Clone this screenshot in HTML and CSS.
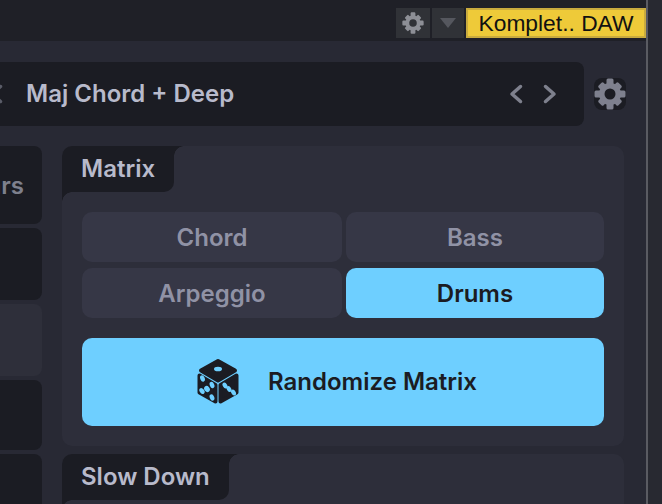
FILE: index.html
```html
<!DOCTYPE html>
<html lang="en">
<head>
<meta charset="utf-8">
<title>Matrix</title>
<link rel="stylesheet" href="styles.css">
</head>
<body>
<svg class="defs" aria-hidden="true">
  <defs>
    <symbol id="gear" viewBox="0 0 32 32">
      <g class="gear-body">
        <circle cx="16" cy="16" r="11"/>
        <rect x="12.500" y="0.500" width="7" height="8" rx="1.500"/>
        <rect x="12.500" y="23.500" width="7" height="8" rx="1.500"/>
        <rect x="0.500" y="12.500" width="8" height="7" rx="1.500"/>
        <rect x="23.500" y="12.500" width="8" height="7" rx="1.500"/>
        <rect x="12.500" y="2" width="7" height="8" rx="1.500" transform="rotate(45 16 16)"/>
        <rect x="12.500" y="22" width="7" height="8" rx="1.500" transform="rotate(45 16 16)"/>
        <rect x="12.500" y="2" width="7" height="8" rx="1.500" transform="rotate(-45 16 16)"/>
        <rect x="12.500" y="22" width="7" height="8" rx="1.500" transform="rotate(-45 16 16)"/>
      </g>
      <circle class="gear-hole" cx="16" cy="16" r="5.500"/>
    </symbol>
  </defs>
</svg>
<div class="app">
  <div class="main">
    <header class="topbar">
      <button class="tool tool-set"><svg class="tool-gear"><use href="#gear"/></svg></button>
      <button class="tool tool-menu"><svg class="tool-arrow" viewBox="0 0 16 10"><path d="M0 0H16L8 10Z"/></svg></button>
      <div class="daw">Komplet.. DAW</div>
    </header>
    <div class="preset-row">
      <div class="preset">
        <svg class="chev chev-cut" viewBox="0 0 14 20"><path d="M11.500 2.500 3 10l8.500 7.500"/></svg>
        <span class="preset-name">Maj Chord + Deep</span>
        <div class="preset-nav">
          <svg class="chev" viewBox="0 0 14 20"><path d="M11.500 2.500 3 10l8.500 7.500"/></svg>
          <svg class="chev" viewBox="0 0 14 20"><path d="M2.500 2.500 11 10l-8.500 7.500"/></svg>
        </div>
      </div>
      <div class="gear-box"><svg class="big-gear"><use href="#gear"/></svg></div>
    </div>
    <div class="content">
      <div class="side">
        <div class="cell cell-first"><span>Bars</span></div>
        <div class="cell"></div>
        <div class="cell cell-active"></div>
        <div class="cell cell-short"></div>
        <div class="cell"></div>
      </div>
      <div class="panels">
        <section class="panel">
          <h2 class="tab">Matrix</h2>
          <div class="panel-body">
            <div class="options">
              <button class="opt">Chord</button>
              <button class="opt">Bass</button>
              <button class="opt">Arpeggio</button>
              <button class="opt on">Drums</button>
            </div>
            <button class="random">
              <svg class="dice" viewBox="0 0 42 47">
                <path class="d" d="M21 3 38 12.500 21 22.500 4 12.500Z"/>
                <path class="d" d="M2.500 17.500 18.500 27V43.500L2.500 34.500Z"/>
                <path class="d" d="M39.500 17.500 23.500 27V43.500L39.500 34.500Z"/>
                <ellipse class="p" cx="21" cy="11" rx="4" ry="2.300"/>
                <ellipse class="p" cx="5.500" cy="20.500" rx="2.200" ry="3.200" transform="rotate(-25 5.500 20.500)"/>
                <ellipse class="p" cx="15" cy="27" rx="2.200" ry="3.200" transform="rotate(-25 15 27)"/>
                <ellipse class="p" cx="10" cy="31" rx="2.600" ry="3.200" transform="rotate(-40 10 31)"/>
                <ellipse class="p" cx="5" cy="33" rx="2.200" ry="3.200" transform="rotate(-40 5 33)"/>
                <ellipse class="p" cx="15" cy="39.500" rx="2.200" ry="3.200" transform="rotate(-25 15 39.500)"/>
                <ellipse class="p" cx="28" cy="27.500" rx="2.200" ry="3.200" transform="rotate(-30 28 27.500)"/>
                <ellipse class="p" cx="32" cy="31" rx="2.200" ry="3.200" transform="rotate(-30 32 31)"/>
                <ellipse class="p" cx="36.500" cy="34.500" rx="2.200" ry="3.200" transform="rotate(-30 36.500 34.500)"/>
              </svg>
              <span>Randomize Matrix</span>
            </button>
          </div>
        </section>
        <section class="panel">
          <h2 class="tab">Slow Down</h2>
          <div class="panel-body short"></div>
        </section>
      </div>
    </div>
  </div>
  <div class="edge"></div>
</div>
</body>
</html>
```
FILE: styles.css
```css
* { box-sizing: border-box; }
html, body { margin: 0; height: 100%; }
body { width: 662px; height: 504px; overflow: hidden; background: #262731; font-family: "Inter", sans-serif; }
button { border: 0; padding: 0; font: inherit; }
.defs { position: absolute; width: 0; height: 0; }
.gear-body { fill: currentColor; }
.gear-hole { fill: var(--hole); }
.app { display: flex; height: 504px; overflow: hidden; }
.main { width: 648px; flex: none; background: #282934; border-right: 2px solid #5a5b62; }
.edge { flex: 1; background: #282931; }
.topbar { height: 41px; background: #1f2027; display: flex; justify-content: flex-end; gap: 2px; padding: 8px 0 3px; }
.tool { height: 30px; background: #303237; display: flex; align-items: center; justify-content: center; }
.tool-set { width: 34px; }
.tool-menu { width: 32px; }
.tool-gear { width: 22px; height: 22px; color: #8d8f96; --hole: #303237; }
.tool-arrow { width: 16px; height: 10px; fill: #55575e; }
.daw { width: 180px; height: 30px; background: #eeca39; border: 2px solid #c9ab3e; color: #111; font: 22.800px/26px "Liberation Sans", sans-serif; text-align: center; }
.preset-row { display: flex; align-items: center; gap: 10px; margin-top: 21px; }
.preset { width: 584px; height: 64px; background: #1b1c23; border-radius: 0 8px 8px 0; display: flex; align-items: center; padding: 0 27px 0 0; }
.preset-name { flex: 1; margin-left: 23px; padding-bottom: 2px; font-size: 24px; font-weight: 600; color: #b8bacb; }
.preset-nav { display: flex; gap: 20px; }
.chev { display: block; flex: none; width: 14px; height: 20px; fill: none; stroke: #7e808d; stroke-width: 3.500; stroke-linecap: round; stroke-linejoin: round; }
.chev-cut { margin-left: -11px; stroke: #5a5c68; }
.gear-box { width: 32px; height: 32px; background: #1b1c23; border-radius: 8px; }
.big-gear { display: block; width: 32px; height: 32px; color: #7e808e; --hole: #1b1c23; }
.content { display: flex; gap: 20px; margin-top: 20px; }
.side { width: 42px; flex: none; display: flex; flex-direction: column; gap: 4px; }
.cell { background: #1b1c23; border-radius: 0 8px 8px 0; height: 72px; }
.cell-first { height: 78px; display: flex; align-items: center; justify-content: flex-end; padding-right: 18px; font-size: 24px; font-weight: 600; color: #7e808d; white-space: nowrap; }
.cell-active { background: #2e2f3a; }
.cell-short { height: 70px; }
.panels { width: 562px; display: flex; flex-direction: column; gap: 8px; }
.panel { background: #2d2e3a; border-radius: 10px; }
.tab { position: relative; margin: 0; height: 46px; width: fit-content; white-space: nowrap; background: #1b1c23; border-radius: 10px 0 10px 0; font-size: 24px; font-weight: 600; color: #b8bacb; padding: 6px 19px 0 19px; line-height: 34px; }
.tab::before, .tab::after { content: ""; position: absolute; width: 10px; height: 10px; background: radial-gradient(circle at 100% 100%, transparent 9.500px, #1b1c23 10px); }
.tab::after { left: 100%; top: 0; }
.tab::before { left: 0; top: 100%; }
.panel-body { padding: 20px; }
.short { height: 20px; padding: 0; }
.options { display: grid; grid-template-columns: 260px 258px; gap: 6px 4px; }
.opt { height: 50px; border-radius: 10px; background: #363746; color: #9092a5; font-size: 24px; font-weight: 600; }
.opt.on { background: #6ecfff; color: #1b1c23; }
.random { margin-top: 20px; width: 100%; height: 88px; border-radius: 10px; background: #6ecfff; color: #1b1c23; display: flex; align-items: center; justify-content: center; gap: 29px; padding: 0 12px 2px 0; font-size: 24px; font-weight: 600; }
.dice { width: 42px; height: 47px; flex: none; }
.d { fill: #1b1c23; stroke: #1b1c23; stroke-width: 4; stroke-linejoin: round; }
.p { fill: #6ecfff; }
```
